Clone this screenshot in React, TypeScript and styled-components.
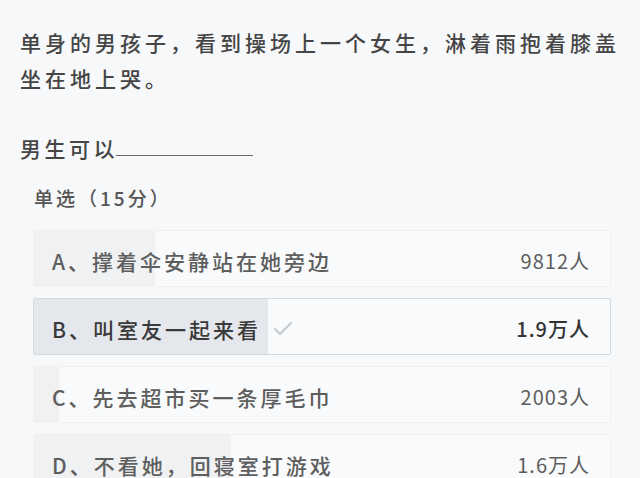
import React from "react";
import styled, { createGlobalStyle } from "styled-components";
import { Check } from "lucide-react";

interface OptionItem {
  key: string;
  label: string;
  count: number;
  countText: string;
  selected?: boolean;
}

const options: OptionItem[] = [
  { key: "A", label: "撑着伞安静站在她旁边", count: 9812, countText: "9812人" },
  { key: "B", label: "叫室友一起来看", count: 19000, countText: "1.9万人", selected: true },
  { key: "C", label: "先去超市买一条厚毛巾", count: 2003, countText: "2003人" },
  { key: "D", label: "不看她，回寝室打游戏", count: 16000, countText: "1.6万人" },
];

const total = options.reduce((sum, o) => sum + o.count, 0);

const GlobalStyle = createGlobalStyle`
  html, body {
    margin: 0;
    padding: 0;
    background: #f7f8fa;
    overflow: hidden;
  }
  body {
    font-family: "Noto Sans CJK SC", "Noto Sans", sans-serif;
  }
`;

const App = () => {
  return (
    <Page>
      <GlobalStyle />
      <Question>单身的男孩子，看到操场上一个女生，淋着雨抱着膝盖坐在地上哭。</Question>
      <Prompt>
        男生可以<Blank />
      </Prompt>
      <Section>
        <SectionTitle>单选（15分）</SectionTitle>
        <OptionList>
          {options.map((o) => (
            <Option key={o.key} $selected={!!o.selected}>
              <Fill $selected={!!o.selected} style={{ width: `${(o.count / total) * 100}%` }} />
              <Label $selected={!!o.selected}>
                {o.key}、{o.label}
                {o.selected && (
                  <Tick>
                    <Check size={24} strokeWidth={2.2} />
                  </Tick>
                )}
              </Label>
              <Count $selected={!!o.selected}>{o.countText}</Count>
            </Option>
          ))}
        </OptionList>
      </Section>
    </Page>
  );
};

const Page = styled.div`
  display: flex;
  flex-direction: column;
  padding: 24px 20px 0;
  width: 640px;
  height: 478px;
  box-sizing: border-box;
`;

const Question = styled.p`
  margin: 0;
  width: 610px;
  font-size: 21px;
  font-weight: 500;
  letter-spacing: 4px;
  line-height: 36px;
  color: #454545;
`;

const Prompt = styled.p`
  margin: 34px 0 0;
  display: flex;
  align-items: center;
  font-size: 21px;
  font-weight: 500;
  letter-spacing: 3.5px;
  line-height: 36px;
  color: #454545;
`;

const Blank = styled.span`
  display: inline-block;
  width: 137px;
  height: 14px;
  margin-left: -2px;
  border-bottom: 1.5px solid #6a6a6a;
`;

const Section = styled.div`
  display: flex;
  flex-direction: column;
  margin: 17px 0 0 13px;
`;

const SectionTitle = styled.div`
  font-size: 19px;
  font-weight: 500;
  letter-spacing: 3px;
  line-height: 30px;
  color: #555;
  margin-left: 1px;
`;

const OptionList = styled.div`
  display: flex;
  flex-direction: column;
  gap: 11px;
  margin-top: 17px;
`;

const Option = styled.div<{ $selected: boolean }>`
  position: relative;
  display: flex;
  align-items: center;
  justify-content: space-between;
  width: 578px;
  height: 57px;
  padding: 4px 20px 0 18px;
  box-sizing: border-box;
  background: #f9fafb;
  border: 1px solid ${({ $selected }) => ($selected ? "#d5d8dc" : "#eef0f2")};
  border-radius: 2px;
  overflow: hidden;
`;

const Fill = styled.div<{ $selected: boolean }>`
  position: absolute;
  left: 0;
  top: 0;
  bottom: 0;
  background: ${({ $selected }) => ($selected ? "#e4e7eb" : "#eff1f3")};
`;

const Label = styled.span<{ $selected: boolean }>`
  position: relative;
  display: flex;
  align-items: center;
  font-size: 21px;
  font-weight: 500;
  letter-spacing: 3px;
  color: ${({ $selected }) => ($selected ? "#3a3a3a" : "#5e5e5e")};
`;

const Tick = styled.span`
  display: flex;
  margin-left: 10px;
  color: #c8cbd0;
`;

const Count = styled.span<{ $selected: boolean }>`
  position: relative;
  font-size: 20px;
  font-weight: ${({ $selected }) => ($selected ? 500 : 400)};
  letter-spacing: 1px;
  color: ${({ $selected }) => ($selected ? "#333" : "#5e5e5e")};
`;

export default App;
